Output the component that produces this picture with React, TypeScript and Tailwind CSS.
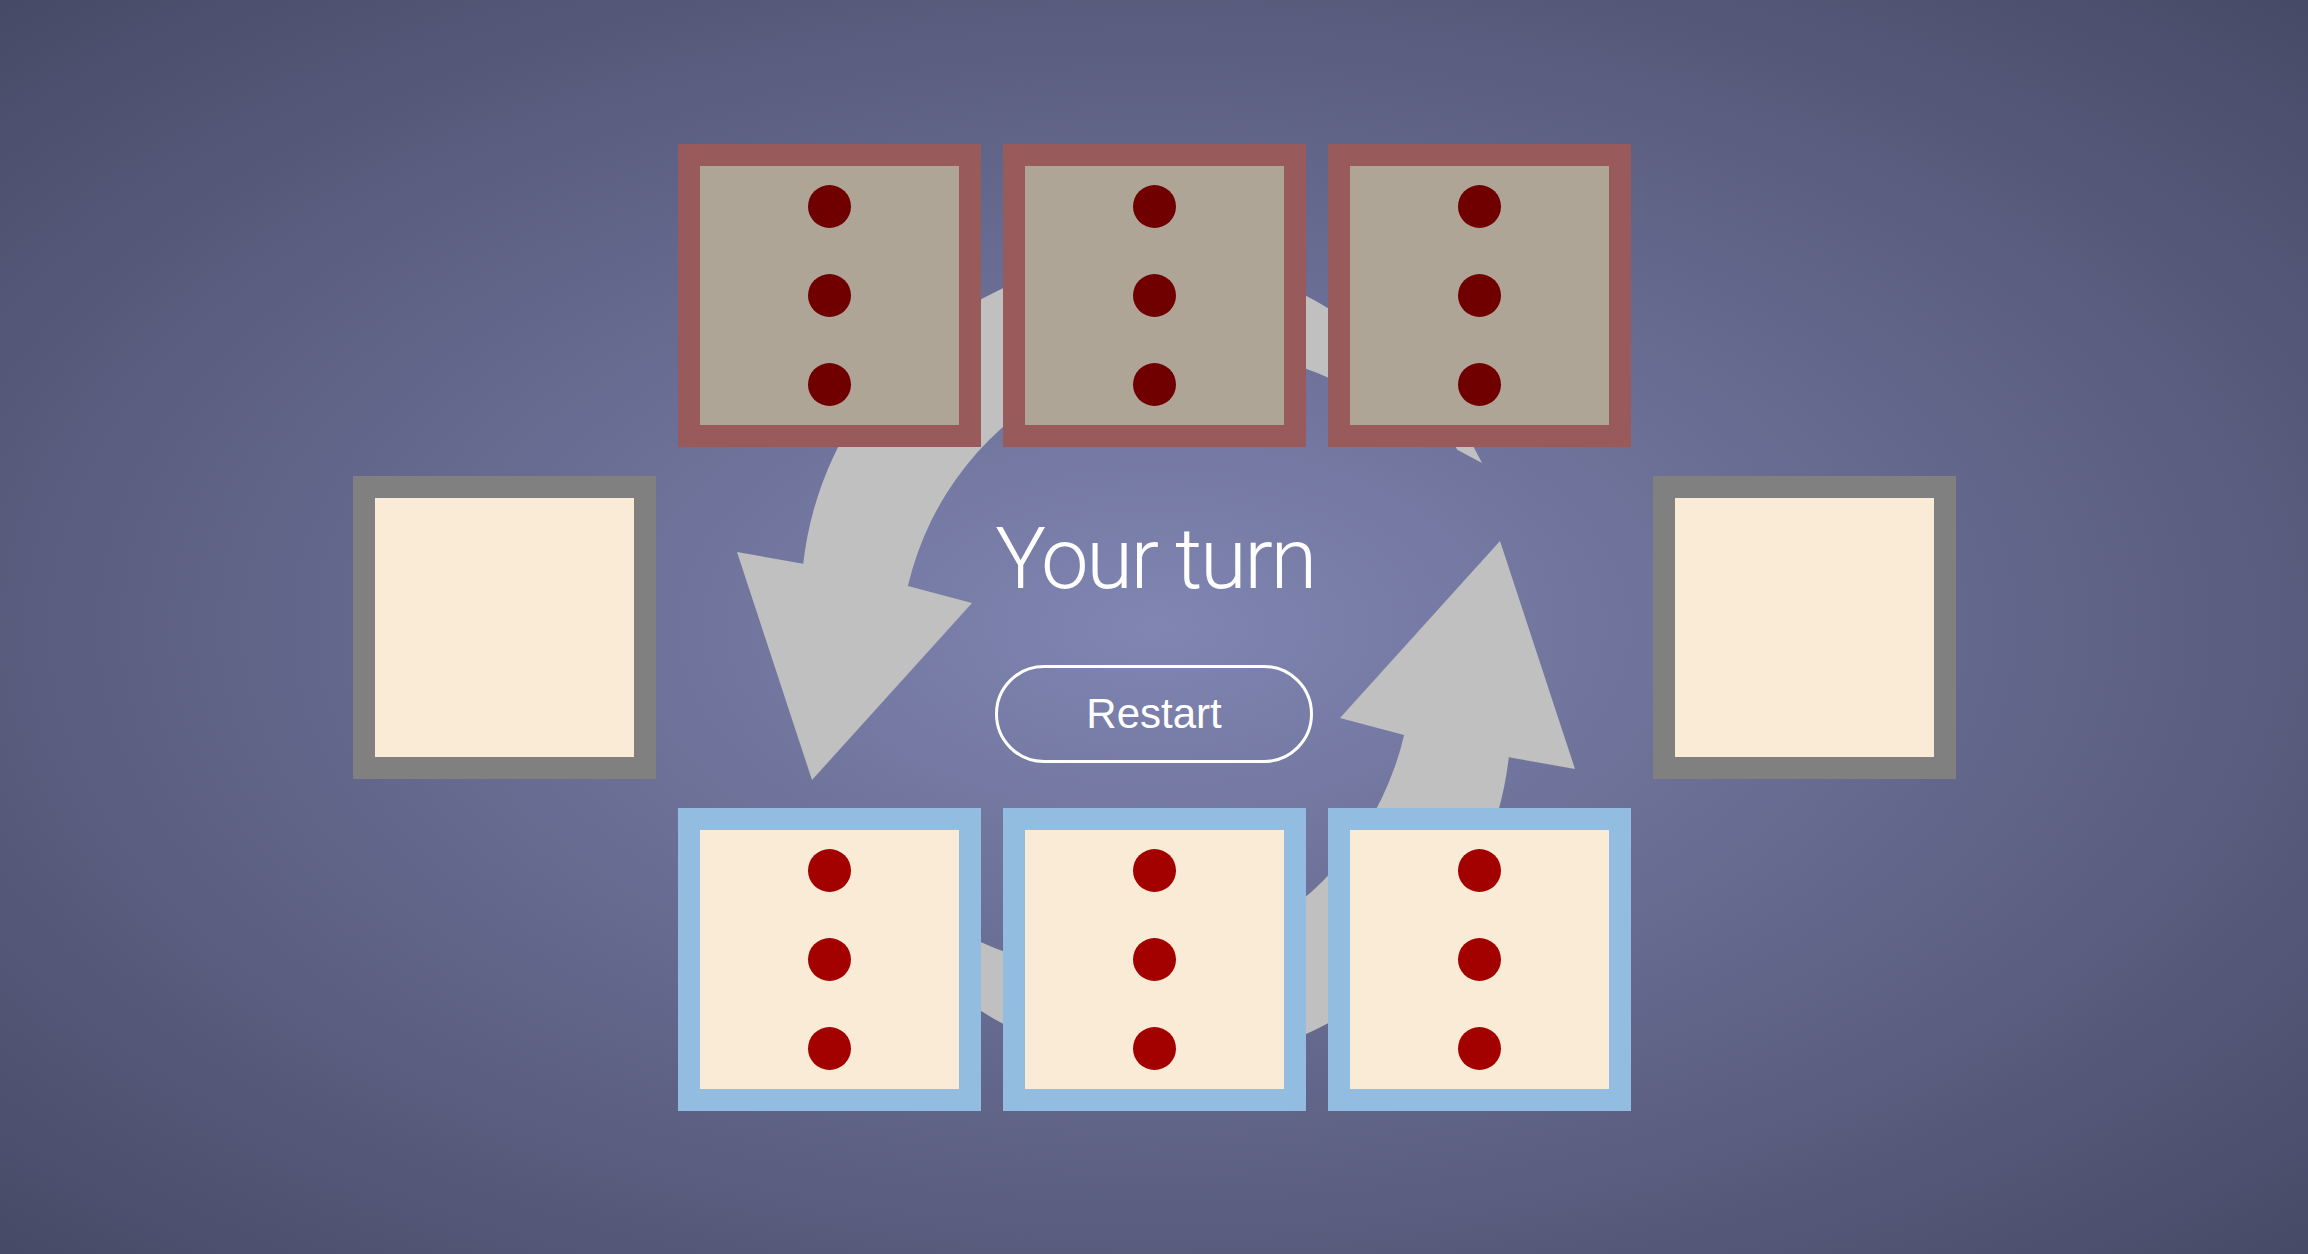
import React from "react"

type Tone = "dim" | "hand" | "empty"

const toneClass: Record<Tone, string> = {
  dim: "border-[#985a5a] bg-[#afa596]",
  hand: "border-[#93bde0] bg-[#faebd7]",
  empty: "border-[#808080] bg-[#faebd7]",
}

function Card({ tone, pips = 0 }: { tone: Tone; pips?: number }) {
  return (
    <div
      className={`flex h-[303px] w-[303px] flex-col items-center justify-center gap-[46px] border-[22px] ${toneClass[tone]}`}
    >
      {Array.from({ length: pips }).map((_, i) => (
        <span
          key={i}
          className={`block h-[43px] w-[43px] rounded-full ${tone === "dim" ? "bg-[#700000]" : "bg-[#a30000]"}`}
        />
      ))}
    </div>
  )
}

// one swoosh arrow; the second one is the same shape turned half a circle
const ARROW =
  "M803.2 563.8 A346 346 0 0 1 1457.2 449.7 L1482 463 L1470 440 L1332.5 379.5 " +
  "A304 304 0 0 0 907.9 586.1 L972 603 L812 780 L737 552 Z"

function CycleArrows() {
  return (
    <svg
      className="pointer-events-none absolute inset-0 h-full w-full"
      viewBox="0 0 2308 1254"
      preserveAspectRatio="none"
    >
      <path d={ARROW} fill="#c0c0c0" />
      <path d={ARROW} fill="#c0c0c0" transform="rotate(180 1156 660.5)" />
    </svg>
  )
}

export default function App() {
  return (
    <div className="relative flex h-[1254px] w-full items-center justify-center overflow-hidden bg-[radial-gradient(ellipse_at_center,#8085b2,#474a66)]">
      <CycleArrows />

      <div className="relative grid grid-cols-[repeat(5,303px)] grid-rows-[repeat(3,303px)] gap-x-[22px] gap-y-[29px]">
        <div />
        <Card tone="dim" pips={3} />
        <Card tone="dim" pips={3} />
        <Card tone="dim" pips={3} />
        <div />

        <Card tone="empty" />
        <div className="col-span-3 flex flex-col items-center pt-[41px]">
          <h1 className="pl-[2px] font-['Roboto',sans-serif] text-[85px] font-light leading-none tracking-[-2.4px] text-white">
            Your turn
          </h1>
          <button className="mt-[63px] flex h-[98px] w-[318px] items-center justify-center rounded-full border-[3px] border-white font-['Liberation_Sans',Arial,sans-serif] text-[42px] text-white">
            Restart
          </button>
        </div>
        <Card tone="empty" />

        <div />
        <Card tone="hand" pips={3} />
        <Card tone="hand" pips={3} />
        <Card tone="hand" pips={3} />
        <div />
      </div>
    </div>
  )
}
